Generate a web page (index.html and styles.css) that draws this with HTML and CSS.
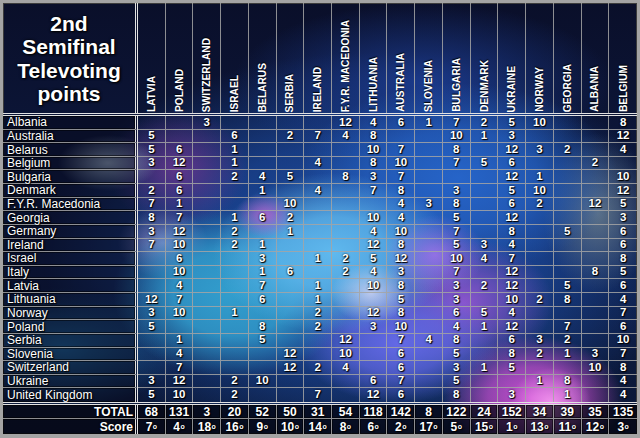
FILE: index.html
```html
<!DOCTYPE html>
<html>
<head>
<meta charset="utf-8">
<link rel="stylesheet" href="styles.css">
</head>
<body>
<div class="board">
  <div class="grid head">
    <div class="title">2nd<br>Semifinal<br>Televoting<br>points</div>
    <div class="h"><span>LATVIA</span></div>
    <div class="h"><span>POLAND</span></div>
    <div class="h"><span>SWITZERLAND</span></div>
    <div class="h"><span>ISRAEL</span></div>
    <div class="h"><span>BELARUS</span></div>
    <div class="h"><span>SERBIA</span></div>
    <div class="h"><span>IRELAND</span></div>
    <div class="h"><span>F.Y.R. MACEDONIA</span></div>
    <div class="h"><span>LITHUANIA</span></div>
    <div class="h"><span>AUSTRALIA</span></div>
    <div class="h"><span>SLOVENIA</span></div>
    <div class="h"><span>BULGARIA</span></div>
    <div class="h"><span>DENMARK</span></div>
    <div class="h"><span>UKRAINE</span></div>
    <div class="h"><span>NORWAY</span></div>
    <div class="h"><span>GEORGIA</span></div>
    <div class="h"><span>ALBANIA</span></div>
    <div class="h"><span>BELGIUM</span></div>
  </div>
  <div class="grid body">
    <div class="row"><div class="c n">Albania</div><div class="c"></div><div class="c"></div><div class="c">3</div><div class="c"></div><div class="c"></div><div class="c"></div><div class="c"></div><div class="c">12</div><div class="c">4</div><div class="c">6</div><div class="c">1</div><div class="c">7</div><div class="c">2</div><div class="c">5</div><div class="c">10</div><div class="c"></div><div class="c"></div><div class="c">8</div></div>
    <div class="row"><div class="c n">Australia</div><div class="c">5</div><div class="c"></div><div class="c"></div><div class="c">6</div><div class="c"></div><div class="c">2</div><div class="c">7</div><div class="c">4</div><div class="c">8</div><div class="c"></div><div class="c"></div><div class="c">10</div><div class="c">1</div><div class="c">3</div><div class="c"></div><div class="c"></div><div class="c"></div><div class="c">12</div></div>
    <div class="row"><div class="c n">Belarus</div><div class="c">5</div><div class="c">6</div><div class="c"></div><div class="c">1</div><div class="c"></div><div class="c"></div><div class="c"></div><div class="c"></div><div class="c">10</div><div class="c">7</div><div class="c"></div><div class="c">8</div><div class="c"></div><div class="c">12</div><div class="c">3</div><div class="c">2</div><div class="c"></div><div class="c">4</div></div>
    <div class="row"><div class="c n">Belgium</div><div class="c">3</div><div class="c">12</div><div class="c"></div><div class="c">1</div><div class="c"></div><div class="c"></div><div class="c">4</div><div class="c"></div><div class="c">8</div><div class="c">10</div><div class="c"></div><div class="c">7</div><div class="c">5</div><div class="c">6</div><div class="c"></div><div class="c"></div><div class="c">2</div><div class="c"></div></div>
    <div class="row"><div class="c n">Bulgaria</div><div class="c"></div><div class="c">6</div><div class="c"></div><div class="c">2</div><div class="c">4</div><div class="c">5</div><div class="c"></div><div class="c">8</div><div class="c">3</div><div class="c">7</div><div class="c"></div><div class="c"></div><div class="c"></div><div class="c">12</div><div class="c">1</div><div class="c"></div><div class="c"></div><div class="c">10</div></div>
    <div class="row"><div class="c n">Denmark</div><div class="c">2</div><div class="c">6</div><div class="c"></div><div class="c"></div><div class="c">1</div><div class="c"></div><div class="c">4</div><div class="c"></div><div class="c">7</div><div class="c">8</div><div class="c"></div><div class="c">3</div><div class="c"></div><div class="c">5</div><div class="c">10</div><div class="c"></div><div class="c"></div><div class="c">12</div></div>
    <div class="row"><div class="c n">F.Y.R. Macedonia</div><div class="c">7</div><div class="c">1</div><div class="c"></div><div class="c"></div><div class="c"></div><div class="c">10</div><div class="c"></div><div class="c"></div><div class="c"></div><div class="c">4</div><div class="c">3</div><div class="c">8</div><div class="c"></div><div class="c">6</div><div class="c">2</div><div class="c"></div><div class="c">12</div><div class="c">5</div></div>
    <div class="row"><div class="c n">Georgia</div><div class="c">8</div><div class="c">7</div><div class="c"></div><div class="c">1</div><div class="c">6</div><div class="c">2</div><div class="c"></div><div class="c"></div><div class="c">10</div><div class="c">4</div><div class="c"></div><div class="c">5</div><div class="c"></div><div class="c">12</div><div class="c"></div><div class="c"></div><div class="c"></div><div class="c">3</div></div>
    <div class="row"><div class="c n">Germany</div><div class="c">3</div><div class="c">12</div><div class="c"></div><div class="c">2</div><div class="c"></div><div class="c">1</div><div class="c"></div><div class="c"></div><div class="c">4</div><div class="c">10</div><div class="c"></div><div class="c">7</div><div class="c"></div><div class="c">8</div><div class="c"></div><div class="c">5</div><div class="c"></div><div class="c">6</div></div>
    <div class="row"><div class="c n">Ireland</div><div class="c">7</div><div class="c">10</div><div class="c"></div><div class="c">2</div><div class="c">1</div><div class="c"></div><div class="c"></div><div class="c"></div><div class="c">12</div><div class="c">8</div><div class="c"></div><div class="c">5</div><div class="c">3</div><div class="c">4</div><div class="c"></div><div class="c"></div><div class="c"></div><div class="c">6</div></div>
    <div class="row"><div class="c n">Israel</div><div class="c"></div><div class="c">6</div><div class="c"></div><div class="c"></div><div class="c">3</div><div class="c"></div><div class="c">1</div><div class="c">2</div><div class="c">5</div><div class="c">12</div><div class="c"></div><div class="c">10</div><div class="c">4</div><div class="c">7</div><div class="c"></div><div class="c"></div><div class="c"></div><div class="c">8</div></div>
    <div class="row"><div class="c n">Italy</div><div class="c"></div><div class="c">10</div><div class="c"></div><div class="c"></div><div class="c">1</div><div class="c">6</div><div class="c"></div><div class="c">2</div><div class="c">4</div><div class="c">3</div><div class="c"></div><div class="c">7</div><div class="c"></div><div class="c">12</div><div class="c"></div><div class="c"></div><div class="c">8</div><div class="c">5</div></div>
    <div class="row"><div class="c n">Latvia</div><div class="c"></div><div class="c">4</div><div class="c"></div><div class="c"></div><div class="c">7</div><div class="c"></div><div class="c">1</div><div class="c"></div><div class="c">10</div><div class="c">8</div><div class="c"></div><div class="c">3</div><div class="c">2</div><div class="c">12</div><div class="c"></div><div class="c">5</div><div class="c"></div><div class="c">6</div></div>
    <div class="row"><div class="c n">Lithuania</div><div class="c">12</div><div class="c">7</div><div class="c"></div><div class="c"></div><div class="c">6</div><div class="c"></div><div class="c">1</div><div class="c"></div><div class="c"></div><div class="c">5</div><div class="c"></div><div class="c">3</div><div class="c"></div><div class="c">10</div><div class="c">2</div><div class="c">8</div><div class="c"></div><div class="c">4</div></div>
    <div class="row"><div class="c n">Norway</div><div class="c">3</div><div class="c">10</div><div class="c"></div><div class="c">1</div><div class="c"></div><div class="c"></div><div class="c">2</div><div class="c"></div><div class="c">12</div><div class="c">8</div><div class="c"></div><div class="c">6</div><div class="c">5</div><div class="c">4</div><div class="c"></div><div class="c"></div><div class="c"></div><div class="c">7</div></div>
    <div class="row"><div class="c n">Poland</div><div class="c">5</div><div class="c"></div><div class="c"></div><div class="c"></div><div class="c">8</div><div class="c"></div><div class="c">2</div><div class="c"></div><div class="c">3</div><div class="c">10</div><div class="c"></div><div class="c">4</div><div class="c">1</div><div class="c">12</div><div class="c"></div><div class="c">7</div><div class="c"></div><div class="c">6</div></div>
    <div class="row"><div class="c n">Serbia</div><div class="c"></div><div class="c">1</div><div class="c"></div><div class="c"></div><div class="c">5</div><div class="c"></div><div class="c"></div><div class="c">12</div><div class="c"></div><div class="c">7</div><div class="c">4</div><div class="c">8</div><div class="c"></div><div class="c">6</div><div class="c">3</div><div class="c">2</div><div class="c"></div><div class="c">10</div></div>
    <div class="row"><div class="c n">Slovenia</div><div class="c"></div><div class="c">4</div><div class="c"></div><div class="c"></div><div class="c"></div><div class="c">12</div><div class="c"></div><div class="c">10</div><div class="c"></div><div class="c">6</div><div class="c"></div><div class="c">5</div><div class="c"></div><div class="c">8</div><div class="c">2</div><div class="c">1</div><div class="c">3</div><div class="c">7</div></div>
    <div class="row"><div class="c n">Switzerland</div><div class="c"></div><div class="c">7</div><div class="c"></div><div class="c"></div><div class="c"></div><div class="c">12</div><div class="c">2</div><div class="c">4</div><div class="c"></div><div class="c">6</div><div class="c"></div><div class="c">3</div><div class="c">1</div><div class="c">5</div><div class="c"></div><div class="c"></div><div class="c">10</div><div class="c">8</div></div>
    <div class="row"><div class="c n">Ukraine</div><div class="c">3</div><div class="c">12</div><div class="c"></div><div class="c">2</div><div class="c">10</div><div class="c"></div><div class="c"></div><div class="c"></div><div class="c">6</div><div class="c">7</div><div class="c"></div><div class="c">5</div><div class="c"></div><div class="c"></div><div class="c">1</div><div class="c">8</div><div class="c"></div><div class="c">4</div></div>
    <div class="row"><div class="c n">United Kingdom</div><div class="c">5</div><div class="c">10</div><div class="c"></div><div class="c">2</div><div class="c"></div><div class="c"></div><div class="c">7</div><div class="c"></div><div class="c">12</div><div class="c">6</div><div class="c"></div><div class="c">8</div><div class="c"></div><div class="c">3</div><div class="c"></div><div class="c">1</div><div class="c"></div><div class="c">4</div></div>
  </div>
  <div class="grid foot">
    <div class="row"><div class="c f lab">TOTAL</div><div class="c f">68</div><div class="c f">131</div><div class="c f">3</div><div class="c f">20</div><div class="c f">52</div><div class="c f">50</div><div class="c f">31</div><div class="c f">54</div><div class="c f">118</div><div class="c f">142</div><div class="c f">8</div><div class="c f">122</div><div class="c f">24</div><div class="c f">152</div><div class="c f">34</div><div class="c f">39</div><div class="c f">35</div><div class="c f">135</div></div>
    <div class="row"><div class="c f lab">Score</div><div class="c f">7<sup>o</sup></div><div class="c f">4<sup>o</sup></div><div class="c f">18<sup>o</sup></div><div class="c f">16<sup>o</sup></div><div class="c f">9<sup>o</sup></div><div class="c f">10<sup>o</sup></div><div class="c f">14<sup>o</sup></div><div class="c f">8<sup>o</sup></div><div class="c f">6<sup>o</sup></div><div class="c f">2<sup>o</sup></div><div class="c f">17<sup>o</sup></div><div class="c f">5<sup>o</sup></div><div class="c f">15<sup>o</sup></div><div class="c f">1<sup>o</sup></div><div class="c f">13<sup>o</sup></div><div class="c f">11<sup>o</sup></div><div class="c f">12<sup>o</sup></div><div class="c f">3<sup>o</sup></div></div>
  </div>
</div>
</body>
</html>
```

FILE: styles.css
```css
* { box-sizing: border-box; margin: 0; padding: 0; }
html, body { width: 640px; height: 438px; overflow: hidden; background: #222; }
body { font-family: "Liberation Sans", Arial, sans-serif; color: #fff; }

.board {
  width: 640px;
  height: 438px;
  border: 3px solid #a4a4a4;
  border-bottom-width: 4px;
  box-shadow: inset 0 0 0 1px #3c3c3c;
  display: flex;
  flex-direction: column;
  background:
    radial-gradient(ellipse 40px 30px at 368px 290px, rgba(215,215,245,.8), rgba(215,215,245,0)),
    radial-gradient(ellipse 30px 22px at 262px 212px, rgba(200,95,210,.75), rgba(200,95,210,0)),
    radial-gradient(ellipse 50px 40px at 432px 252px, rgba(160,115,235,.85), rgba(160,115,235,0)),
    radial-gradient(ellipse 120px 80px at 330px 250px, rgb(95,185,238) 0%, rgba(95,185,238,.8) 45%, rgba(95,185,238,0) 100%),
    radial-gradient(ellipse 120px 85px at 230px 290px, rgb(50,158,205) 0%, rgba(50,158,205,.85) 50%, rgba(50,158,205,0) 100%),
    radial-gradient(ellipse 100px 60px at 395px 340px, rgb(100,105,230) 0%, rgba(100,105,230,.7) 50%, rgba(100,105,230,0) 100%),
    radial-gradient(ellipse 40px 35px at 548px 400px, rgba(245,150,240,.95), rgba(245,150,240,0)),
    radial-gradient(ellipse 90px 62px at 530px 395px, rgb(200,80,210) 0%, rgba(200,80,210,.7) 50%, rgba(200,80,210,0) 100%),
    radial-gradient(ellipse 90px 65px at 460px 300px, rgb(140,85,205) 0%, rgba(140,85,205,.55) 50%, rgba(140,85,205,0) 100%),
    radial-gradient(ellipse 160px 95px at 455px 175px, rgb(38,100,200) 0%, rgba(38,100,200,.7) 50%, rgba(38,100,200,0) 100%),
    radial-gradient(ellipse 55px 80px at 595px 210px, rgba(110,130,145,.8), rgba(110,130,145,0)),
    radial-gradient(ellipse 50px 28px at 105px 160px, rgba(180,200,220,.7), rgba(180,200,220,0)),
    radial-gradient(ellipse 45px 35px at 160px 240px, rgba(170,160,220,.7), rgba(170,160,220,0)),
    radial-gradient(ellipse 70px 60px at 175px 165px, rgba(120,55,150,.75), rgba(120,55,150,0)),
    radial-gradient(ellipse 120px 60px at 60px 345px, rgba(30,100,155,.9), rgba(30,100,155,0)),
    radial-gradient(ellipse 190px 80px at 420px 80px, rgba(28,60,145,.9), rgba(28,60,145,0)),
    radial-gradient(ellipse 320px 200px at 360px 250px, rgb(30,80,170) 0%, rgba(30,80,170,.65) 55%, rgba(30,80,170,0) 100%),
    linear-gradient(#0a0f2a, #0d1c45 60%, #0b1836);
}

.grid {
  display: grid;
  grid-template-columns: 135px repeat(18, 1fr);
}

.head {
  height: 113px;
  border-bottom: 3px double #e2e2e2;
}

.title {
  border-right: 3px double #e2e2e2;
  display: flex;
  align-items: center;
  justify-content: center;
  text-align: center;
  font-weight: bold;
  font-size: 21px;
  line-height: 23.5px;
  padding-top: 1px;
  text-shadow: 1px 1px 2px #000, 0 0 3px #000;
}

.h {
  border-right: 1px solid rgba(165,165,165,.85);
  display: flex;
  justify-content: center;
  align-items: flex-end;
  padding-bottom: 1px;
}
.h:last-child { border-right: none; }
.h span {
  writing-mode: vertical-rl;
  transform: rotate(180deg);
  font-weight: bold;
  font-size: 10.2px;
  white-space: nowrap;
  text-transform: uppercase;
  text-shadow: 1px 0 1px #000;
}

.body {
  height: 286px;
  grid-template-rows: repeat(21, 1fr);
}

.foot {
  height: 32px;
  border-top: 3px double #e2e2e2;
  grid-template-rows: 14px 15px;
}

.row { display: contents; }

.c {
  border-right: 1px solid rgba(165,165,165,.85);
  border-bottom: 1px solid rgba(165,165,165,.85);
  display: flex;
  align-items: center;
  justify-content: center;
  font-weight: bold;
  font-size: 11.5px;
  line-height: 1;
  text-shadow: 1px 1px 1px #000, 0 0 2px #000;
}
.c:last-child { border-right: none; }
.row:last-child .c { border-bottom: none; }

.n {
  justify-content: flex-start;
  padding-left: 4px;
  font-weight: normal;
  font-size: 12px;
  border-right: 3px double #e2e2e2;
  background: rgba(6,6,22,.45);
  box-shadow: inset 0 0 0 1px rgba(0,0,0,.5);
}

.f {
  font-size: 12px;
  background: rgba(4,6,16,.72);
  box-shadow: inset 0 0 0 1px rgba(0,0,0,.5);
}
.lab {
  justify-content: flex-end;
  padding-right: 2px;
  border-right: 3px double #e2e2e2;
}
.f sup {
  font-size: 7px;
  vertical-align: 4px;
  margin-left: 0.5px;
}
```
